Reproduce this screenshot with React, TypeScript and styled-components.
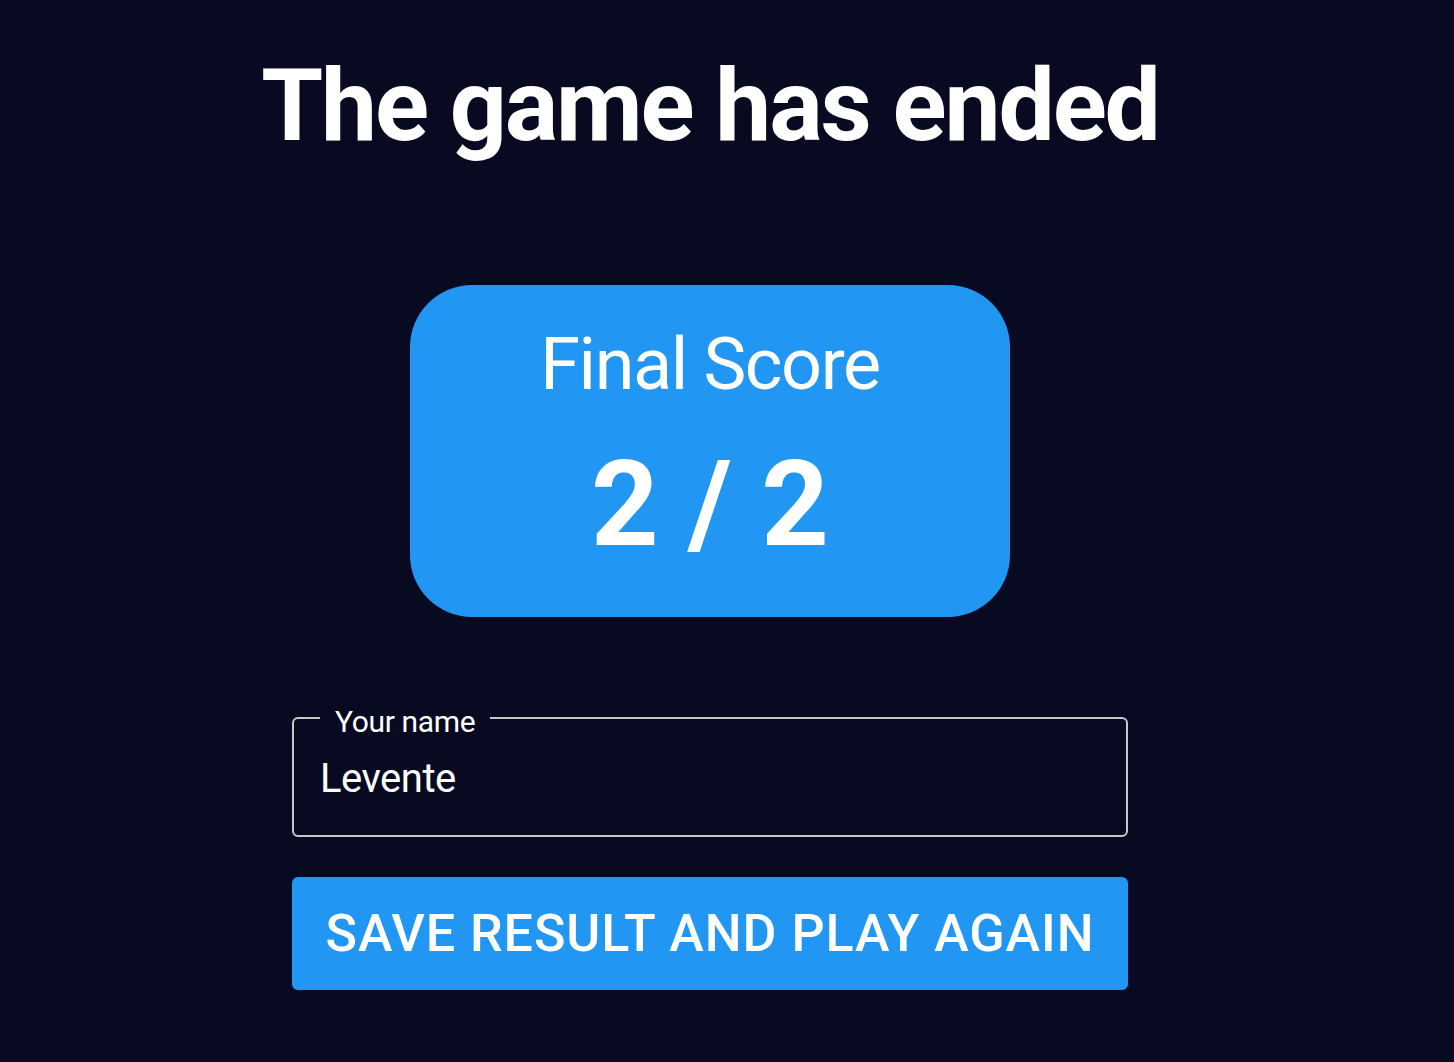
import React from "react";
import styled, { createGlobalStyle } from "styled-components";

const Global = createGlobalStyle`
  html, body {
    margin: 0;
    padding: 0;
    background: #080a21;
    font-family: Roboto, "Liberation Sans", Arial, sans-serif;
    color: #ffffff;
  }
  * { box-sizing: border-box; }
`;

const Page = styled.main`
  width: 1420px;
  min-height: 1062px;
  display: flex;
  flex-direction: column;
  align-items: center;
  padding-top: 46px;
`;

const Title = styled.h1`
  margin: 0;
  font-size: 100px;
  line-height: 120px;
  font-weight: 700;
  letter-spacing: -2.1px;
`;

const ScoreCard = styled.section`
  margin-top: 119px;
  width: 600px;
  height: 332px;
  border-radius: 62px;
  background: #2196f3;
  display: flex;
  flex-direction: column;
  align-items: center;
  padding-top: 44px;
`;

const ScoreLabel = styled.div`
  font-size: 72px;
  line-height: 72px;
  font-weight: 400;
  letter-spacing: -1.4px;
`;

const ScoreValue = styled.div`
  margin-top: 45px;
  font-size: 118px;
  line-height: 118px;
  font-weight: 700;
`;

const Form = styled.form`
  margin-top: 82px;
  width: 836px;
  display: flex;
  flex-direction: column;
  gap: 40px;
`;

const Field = styled.fieldset`
  margin: 0;
  padding: 0 26px 37px 26px;
  border: 2px solid #c8c8c8;
  border-radius: 6px;
  display: flex;
  flex-direction: column;
`;

const Legend = styled.legend`
  padding: 8px 15px 0 15px;
  font-size: 30px;
  line-height: 30px;
  font-weight: 400;
  letter-spacing: -0.35px;
  color: #ffffff;
`;

const NameInput = styled.input`
  margin-top: 21px;
  padding: 0;
  border: none;
  outline: none;
  background: transparent;
  color: #ffffff;
  font-family: Roboto, "Liberation Sans", Arial, sans-serif;
  font-size: 40px;
  line-height: 40px;
  height: 40px;
  letter-spacing: -0.5px;
`;

const SubmitButton = styled.button`
  height: 113px;
  border: none;
  border-radius: 6px;
  background: #2196f3;
  color: #ffffff;
  font-family: Roboto, "Liberation Sans", Arial, sans-serif;
  font-size: 52px;
  font-weight: 500;
  letter-spacing: 0.95px;
  text-transform: uppercase;
  display: flex;
  align-items: center;
  justify-content: center;
  cursor: pointer;
`;

export default function App() {
  return (
    <>
      <Global />
      <Page>
        <Title>The game has ended</Title>
        <ScoreCard>
          <ScoreLabel>Final Score</ScoreLabel>
          <ScoreValue>2 / 2</ScoreValue>
        </ScoreCard>
        <Form onSubmit={(e) => e.preventDefault()}>
          <Field>
            <Legend>Your name</Legend>
            <NameInput defaultValue="Levente" />
          </Field>
          <SubmitButton type="submit">Save result and play again</SubmitButton>
        </Form>
      </Page>
    </>
  );
}
